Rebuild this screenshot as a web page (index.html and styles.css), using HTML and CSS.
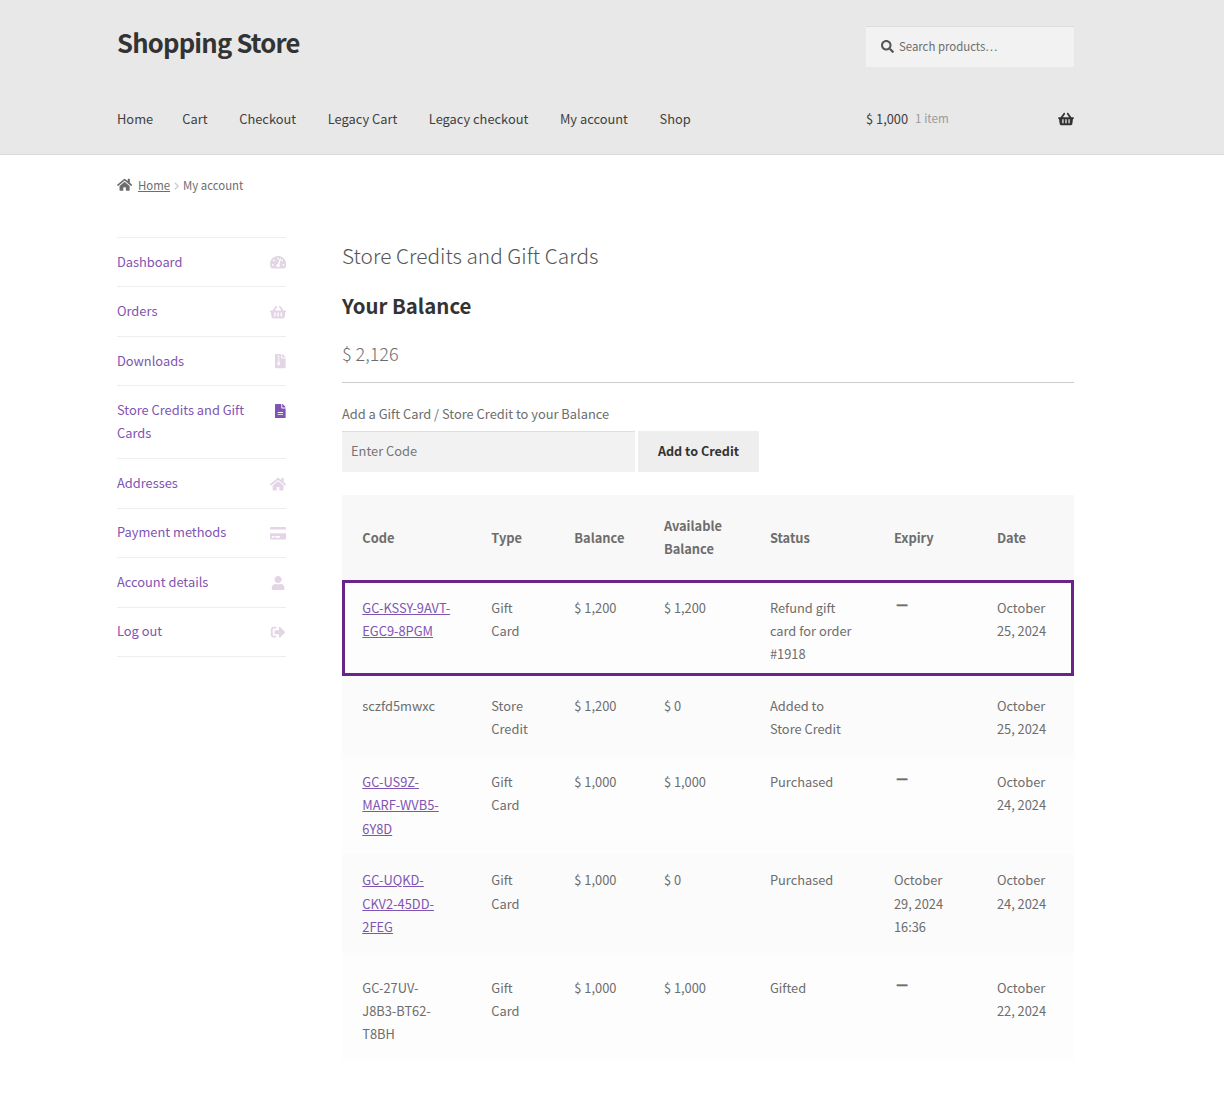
FILE: index.html
```html
<!DOCTYPE html>
<html lang="en">
<head>
    <meta charset="UTF-8">
    <meta name="viewport" content="width=device-width, initial-scale=1.0">
    <title>Shopping Store</title>
    <link rel="stylesheet" href="styles.css">
</head>
<body>
    <!-- Icon sprite -->
    <svg class="sprite" aria-hidden="true">
        <symbol id="i-search" viewBox="0 0 512 512"><path d="M505 442.7L405.3 343c-4.5-4.5-10.6-7-17-7H372c27.6-35.3 44-79.7 44-128C416 93.1 322.9 0 208 0S0 93.1 0 208s93.1 208 208 208c48.3 0 92.7-16.4 128-44v16.3c0 6.4 2.5 12.5 7 17l99.7 99.7c9.4 9.4 24.6 9.4 33.9 0l28.3-28.3c9.4-9.4 9.4-24.6.1-34zM208 336c-70.7 0-128-57.2-128-128 0-70.7 57.2-128 128-128 70.7 0 128 57.2 128 128 0 70.7-57.2 128-128 128z"/></symbol>
        <symbol id="i-basket" viewBox="0 0 576 512"><path d="M576 216v16c0 13.255-10.745 24-24 24h-8l-26.113 182.788C514.509 462.435 494.257 480 470.37 480H105.63c-23.887 0-44.139-17.565-47.518-41.212L32 256h-8c-13.255 0-24-10.745-24-24v-16c0-13.255 10.745-24 24-24h67.341l106.78-146.821c10.395-14.292 30.407-17.453 44.701-7.058 14.293 10.395 17.453 30.408 7.058 44.701L170.477 192h235.046L326.12 82.821c-10.395-14.292-7.234-34.306 7.059-44.701 14.291-10.395 34.306-7.235 44.701 7.058L484.659 192H552c13.255 0 24 10.745 24 24zM312 392V280c0-13.255-10.745-24-24-24s-24 10.745-24 24v112c0 13.255 10.745 24 24 24s24-10.745 24-24zm112 0V280c0-13.255-10.745-24-24-24s-24 10.745-24 24v112c0 13.255 10.745 24 24 24s24-10.745 24-24zm-224 0V280c0-13.255-10.745-24-24-24s-24 10.745-24 24v112c0 13.255 10.745 24 24 24s24-10.745 24-24z"/></symbol>
        <symbol id="i-home" viewBox="0 0 576 512"><path d="M280.37 148.26L96 300.11V464a16 16 0 0 0 16 16l112.06-.29a16 16 0 0 0 15.92-16V368a16 16 0 0 1 16-16h64a16 16 0 0 1 16 16v95.64a16 16 0 0 0 16 16.05L464 480a16 16 0 0 0 16-16V300L295.67 148.26a12.19 12.19 0 0 0-15.3 0zM571.6 251.47L488 182.56V44.05a12 12 0 0 0-12-12h-56a12 12 0 0 0-12 12v72.61L318.47 43a48 48 0 0 0-61 0L4.34 251.47a12 12 0 0 0-1.6 16.9l25.5 31A12 12 0 0 0 45.15 301l235.22-193.74a12.19 12.19 0 0 1 15.3 0L530.9 301a12 12 0 0 0 16.9-1.6l25.5-31a12 12 0 0 0-1.7-16.93z"/></symbol>
        <symbol id="i-gauge" viewBox="0 0 576 512"><path d="M288 32C128.94 32 0 160.94 0 320c0 52.8 14.25 102.26 39.06 144.8 5.61 9.62 16.3 15.2 27.44 15.2h443c11.14 0 21.83-5.58 27.44-15.2C561.75 422.26 576 372.8 576 320c0-159.06-128.94-288-288-288zm0 64c14.71 0 26.58 10.13 30.32 23.65-1.11 2.26-2.64 4.23-3.45 6.67l-9.22 27.67c-5.13 3.49-10.97 6.01-17.64 6.01-17.67 0-32-14.33-32-32S270.33 96 288 96zM96 384c-17.67 0-32-14.33-32-32s14.33-32 32-32 32 14.33 32 32-14.33 32-32 32zm48-160c-17.67 0-32-14.33-32-32s14.33-32 32-32 32 14.33 32 32-14.33 32-32 32zm246.77-72.41l-61.33 184C343.13 347.33 352 364.54 352 384c0 11.72-3.38 22.55-8.88 32H232.88c-5.5-9.45-8.88-20.28-8.88-32 0-33.94 26.5-61.43 59.9-63.59l61.34-184.01c4.17-12.56 17.73-19.45 30.36-15.17 12.57 4.19 19.35 17.79 15.17 30.36zm14.66 57.2l15.52-46.55c3.47-1.29 7.13-2.23 11.05-2.23 17.67 0 32 14.33 32 32s-14.33 32-32 32c-11.38-.01-20.89-6.28-26.57-15.22zM480 384c-17.67 0-32-14.33-32-32s14.33-32 32-32 32 14.33 32 32-14.33 32-32 32z"/></symbol>
        <symbol id="i-archive" viewBox="0 0 384 512"><path fill-rule="evenodd" d="M377 105L279.1 7c-4.5-4.5-10.6-7-17-7H256v128h128v-6.1c0-6.3-2.5-12.4-7-16.9zM224 136V0H24C10.7 0 0 10.7 0 24v464c0 13.3 10.7 24 24 24h336c13.3 0 24-10.7 24-24V160H248c-13.2 0-24-10.8-24-24zM128 32h32v32h-32zM96 64h32v32H96zm32 32h32v32h-32zM96 128h32v32H96zm32 32h32v32h-32zM96 192h32v32H96zm32 32h32v32h-32zM96 280h64l16 80a34 34 0 1 1-96 0zm14 76a18 18 0 1 0 36 0 18 18 0 1 0-36 0z"/></symbol>
        <symbol id="i-file" viewBox="0 0 384 512"><path d="M224 136V0H24C10.7 0 0 10.7 0 24v464c0 13.3 10.7 24 24 24h336c13.3 0 24-10.7 24-24V160H248c-13.2 0-24-10.8-24-24zm64 236c0 6.6-5.4 12-12 12H108c-6.6 0-12-5.4-12-12v-8c0-6.6 5.4-12 12-12h168c6.6 0 12 5.4 12 12v8zm0-64c0 6.6-5.4 12-12 12H108c-6.6 0-12-5.4-12-12v-8c0-6.6 5.4-12 12-12h168c6.6 0 12 5.4 12 12v8zm96-186.1v6.1H256V0h6.1c6.4 0 12.5 2.5 17 7l97.9 98c4.5 4.5 7 10.6 7 16.9z"/></symbol>
        <symbol id="i-card" viewBox="0 0 576 512"><path d="M0 432c0 26.5 21.5 48 48 48h480c26.5 0 48-21.5 48-48V256H0v176zm192-68c0-6.6 5.4-12 12-12h136c6.6 0 12 5.4 12 12v40c0 6.6-5.4 12-12 12H204c-6.6 0-12-5.4-12-12v-40zm-128 0c0-6.6 5.4-12 12-12h72c6.6 0 12 5.4 12 12v40c0 6.6-5.4 12-12 12H76c-6.6 0-12-5.4-12-12v-40zM576 80v48H0V80c0-26.5 21.5-48 48-48h480c26.5 0 48 21.5 48 48z"/></symbol>
        <symbol id="i-user" viewBox="0 0 448 512"><path d="M224 256c70.7 0 128-57.3 128-128S294.7 0 224 0 96 57.3 96 128s57.3 128 128 128zm89.6 32h-16.7c-22.2 10.2-46.9 16-72.9 16s-50.6-5.8-72.9-16h-16.7C60.2 288 0 348.2 0 422.4V464c0 26.5 21.5 48 48 48h352c26.5 0 48-21.5 48-48v-41.6c0-74.2-60.2-134.4-134.4-134.4z"/></symbol>
        <symbol id="i-logout" viewBox="0 0 512 512"><path d="M497 273L329 441c-15 15-41 4.5-41-17v-96H152c-13.3 0-24-10.7-24-24v-96c0-13.3 10.7-24 24-24h136V88c0-21.4 25.9-32 41-17l168 168c9.3 9.4 9.3 24.6 0 34zM192 436v-40c0-6.6-5.4-12-12-12H96c-17.7 0-32-14.3-32-32V160c0-17.7 14.3-32 32-32h84c6.6 0 12-5.4 12-12V76c0-6.6-5.4-12-12-12H96c-53 0-96 43-96 96v192c0 53 43 96 96 96h84c6.6 0 12-5.4 12-12z"/></symbol>
    </svg>

    <header class="site-header">
        <div class="col-full">
            <div class="header-top">
                <a class="site-title" href="#">Shopping Store</a>
                <form class="site-search">
                    <svg class="search-icon"><use href="#i-search"/></svg>
                    <input type="search" placeholder="Search products…">
                </form>
            </div>
            <div class="header-nav">
                <nav class="main-nav">
                    <a href="#">Home</a>
                    <a href="#">Cart</a>
                    <a href="#">Checkout</a>
                    <a href="#">Legacy Cart</a>
                    <a href="#">Legacy checkout</a>
                    <a href="#">My account</a>
                    <a href="#">Shop</a>
                </nav>
                <a class="header-cart" href="#">
                    <span class="cart-amount">$ 1,000</span>
                    <span class="cart-count">1 item</span>
                    <svg class="cart-icon"><use href="#i-basket"/></svg>
                </a>
            </div>
        </div>
    </header>

    <div class="col-full">
        <div class="breadcrumb">
            <svg class="crumb-home"><use href="#i-home"/></svg>
            <a href="#">Home</a>
            <svg class="crumb-sep" viewBox="0 0 6 10"><path d="M1 1l4 4-4 4" fill="none" stroke="currentColor" stroke-width="1.6"/></svg>
            <span>My account</span>
        </div>

        <div class="account">
            <nav class="account-nav">
                <a href="#"><span>Dashboard</span><svg class="wide"><use href="#i-gauge"/></svg></a>
                <a href="#"><span>Orders</span><svg class="wide"><use href="#i-basket"/></svg></a>
                <a href="#"><span>Downloads</span><svg class="narrow"><use href="#i-archive"/></svg></a>
                <a class="active" href="#"><span>Store Credits and Gift Cards</span><svg class="narrow"><use href="#i-file"/></svg></a>
                <a href="#"><span>Addresses</span><svg class="wide"><use href="#i-home"/></svg></a>
                <a href="#"><span>Payment methods</span><svg class="wide"><use href="#i-card"/></svg></a>
                <a href="#"><span>Account details</span><svg class="wide"><use href="#i-user"/></svg></a>
                <a href="#"><span>Log out</span><svg class="wide"><use href="#i-logout"/></svg></a>
            </nav>

            <main class="account-content">
                <h2 class="page-title">Store Credits and Gift Cards</h2>
                <h3 class="balance-title">Your Balance</h3>
                <p class="balance">$ 2,126</p>
                <hr class="balance-rule">
                <label class="redeem-label" for="code">Add a Gift Card / Store Credit to your Balance</label>
                <form class="redeem">
                    <input id="code" type="text" placeholder="Enter Code">
                    <button type="button">Add to Credit</button>
                </form>

                <table class="credits">
                    <colgroup>
                        <col class="c-code"><col class="c-type"><col class="c-bal"><col class="c-avail">
                        <col class="c-status"><col class="c-exp"><col class="c-date">
                    </colgroup>
                    <thead>
                        <tr>
                            <th>Code</th><th>Type</th><th>Balance</th><th>Available Balance</th>
                            <th>Status</th><th>Expiry</th><th>Date</th>
                        </tr>
                    </thead>
                    <tbody>
                        <tr class="row-a highlight">
                            <td><a href="#">GC-KSSY-9AVT-EGC9-8PGM</a></td><td>Gift Card</td><td>$ 1,200</td><td>$ 1,200</td>
                            <td>Refund gift card for order #1918</td><td><span class="dash">—</span></td><td>October 25, 2024</td>
                        </tr>
                        <tr class="row-b second">
                            <td>sczfd5mwxc</td><td>Store Credit</td><td>$ 1,200</td><td>$ 0</td>
                            <td>Added to Store Credit</td><td></td><td>October 25, 2024</td>
                        </tr>
                        <tr class="row-a">
                            <td><a href="#">GC-US9Z-MARF-WVB5-6Y8D</a></td><td>Gift Card</td><td>$ 1,000</td><td>$ 1,000</td>
                            <td>Purchased</td><td><span class="dash">—</span></td><td>October 24, 2024</td>
                        </tr>
                        <tr class="row-b">
                            <td><a href="#">GC-UQKD-CKV2-45DD-2FEG</a></td><td>Gift Card</td><td>$ 1,000</td><td>$ 0</td>
                            <td>Purchased</td><td>October 29, 2024 16:36</td><td>October 24, 2024</td>
                        </tr>
                        <tr class="row-a last">
                            <td>GC-27UV-J8B3-BT62-T8BH</td><td>Gift Card</td><td>$ 1,000</td><td>$ 1,000</td>
                            <td>Gifted</td><td><span class="dash">—</span></td><td>October 22, 2024</td>
                        </tr>
                    </tbody>
                </table>
            </main>
        </div>
    </div>
</body>
</html>
```

FILE: styles.css
```css
* {
    box-sizing: border-box;
}

body {
    margin: 0;
    background: #fff;
    color: #6d6d6d;
    font-family: "Noto Sans CJK SC", "Noto Sans", sans-serif;
    font-size: 12.85px;
    line-height: 23.3px;
}

a {
    color: #7f54b3;
}

.sprite {
    display: none;
}

.col-full {
    width: 957px;
    margin-left: 117px;
}

/* Header */
.site-header {
    height: 155px;
    background: #e8e8e8;
    border-bottom: 1px solid #d9d9d9;
}

.header-top {
    display: flex;
    justify-content: space-between;
    padding-top: 26px;
    height: 92px;
}

.site-title {
    height: 34px;
    margin-top: -1px;
    color: #333;
    font-size: 25.6px;
    font-weight: 700;
    letter-spacing: -0.8px;
    line-height: 34px;
    text-decoration: none;
}

.site-search {
    display: flex;
    align-items: center;
    width: 208px;
    height: 41px;
    padding-left: 15px;
    background: #f2f2f2;
    border-top: 1px solid #ddd;
}

.search-icon {
    width: 13px;
    height: 13px;
    margin: -2px 5px 0 0;
    fill: #555;
}

.site-search input {
    flex: 1;
    min-width: 0;
    padding: 0;
    border: 0;
    outline: 0;
    background: none;
    font: inherit;
    font-size: 11.4px;
}

.site-search input::placeholder {
    color: #6d6d6d;
    opacity: 1;
}

.header-nav {
    display: flex;
    justify-content: space-between;
    align-items: center;
    height: 54px;
}

.main-nav {
    display: flex;
    gap: 31.6px;
}

.main-nav a {
    color: #404040;
    text-decoration: none;
}

.main-nav a:first-child {
    margin-right: -2.4px;
}

.header-cart {
    display: flex;
    align-items: center;
    width: 208px;
    color: #404040;
    text-decoration: none;
}

.cart-count {
    margin-left: 7px;
    color: #9a9a9a;
    font-size: 11.6px;
}

.cart-icon {
    width: 16px;
    height: 14px;
    margin-left: auto;
    fill: #333;
}

/* Breadcrumb */
.breadcrumb {
    display: flex;
    align-items: center;
    height: 62px;
    font-size: 11.4px;
}

.breadcrumb a {
    color: #6d6d6d;
}

.crumb-home {
    width: 15.2px;
    height: 13.5px;
    margin: -2px 5.8px 0 0;
    fill: #6d6d6d;
}

.crumb-sep {
    width: 5px;
    height: 8px;
    margin: 0 4px 0 4px;
    color: #ccc;
}

/* Account layout */
.account {
    display: flex;
    align-items: flex-start;
    padding-top: 20px;
}

.account-nav {
    width: 169px;
    margin-right: 56px;
    border-top: 1px solid #eee;
}

.account-nav a {
    display: flex;
    justify-content: space-between;
    align-items: flex-start;
    padding: 11.6px 0 13.6px;
    border-bottom: 1px solid #eee;
    text-decoration: none;
}

.account-nav span {
    max-width: 140px;
}

.account-nav svg {
    height: 14.4px;
    margin-top: 5.8px;
    fill: #e3d5e6;
    flex: none;
}

.account-nav svg.wide {
    width: 16.2px;
}

.account-nav svg.narrow {
    width: 10.8px;
}

.account-nav .active svg {
    fill: #7f54b3;
}

.account-content {
    width: 732px;
}

.page-title {
    margin: 0;
    padding-top: 2px;
    color: #555;
    font-size: 20.8px;
    font-weight: 300;
    line-height: 32px;
}

.balance-title {
    margin: 18px 0 0;
    color: #333;
    font-size: 20.4px;
    font-weight: 600;
    line-height: 32px;
}

.balance {
    margin: 16px 0 0;
    font-size: 18px;
    font-weight: 300;
    line-height: 32px;
}

.balance-rule {
    height: 1px;
    margin: 13px 0 0;
    border: 0;
    background: #ccc;
}

.redeem-label {
    display: block;
    margin-top: 19px;
}

.redeem {
    display: flex;
    gap: 3px;
    margin-top: 6px;
}

.redeem input {
    width: 293px;
    height: 41px;
    padding: 0 9px 3px;
    border: 0;
    border-top: 1px solid #ddd;
    outline: 0;
    background: #f2f2f2;
    font: inherit;
}

.redeem input::placeholder {
    color: #757575;
    opacity: 1;
}

.redeem button {
    width: 121px;
    height: 41px;
    padding: 0 0 2px;
    border: 0;
    background: #eee;
    color: #333;
    font: inherit;
    font-size: 12.6px;
    font-weight: 600;
}

/* Credits table */
.credits {
    width: 732px;
    margin-top: 23px;
    border-collapse: collapse;
    table-layout: fixed;
}

.c-code { width: 129px; }
.c-type { width: 83px; }
.c-bal { width: 89.6px; }
.c-avail { width: 106px; }
.c-status { width: 124px; }
.c-exp { width: 103px; }
.c-date { width: 97.4px; }

.credits th,
.credits td {
    padding: 14.4px 20px 14.4px 20.3px;
    text-align: left;
    vertical-align: top;
}

.credits th {
    height: 85px;
    background: #f8f8f8;
    font-weight: 600;
    vertical-align: middle;
}

.credits th:nth-child(4) {
    padding-bottom: 15px;
}

.row-a td {
    background: #fdfdfd;
}

.row-b td {
    padding-top: 14px;
    padding-bottom: 14.8px;
    background: #fbfbfb;
}

.credits td:first-child {
    padding-right: 19px;
}

.dash {
    display: block;
    margin-top: -4px;
    padding-left: 2.4px;
    font-weight: 700;
    -webkit-text-stroke: 0.4px #6d6d6d;
}

.highlight {
    outline: 3px solid #6a2489;
    outline-offset: -3px;
}

.highlight td {
    padding-top: 15.6px;
    padding-bottom: 10.4px;
}

.second td {
    padding-top: 18px;
    padding-bottom: 15px;
}

.last td {
    padding-top: 22.4px;
    padding-bottom: 13.6px;
}
```
